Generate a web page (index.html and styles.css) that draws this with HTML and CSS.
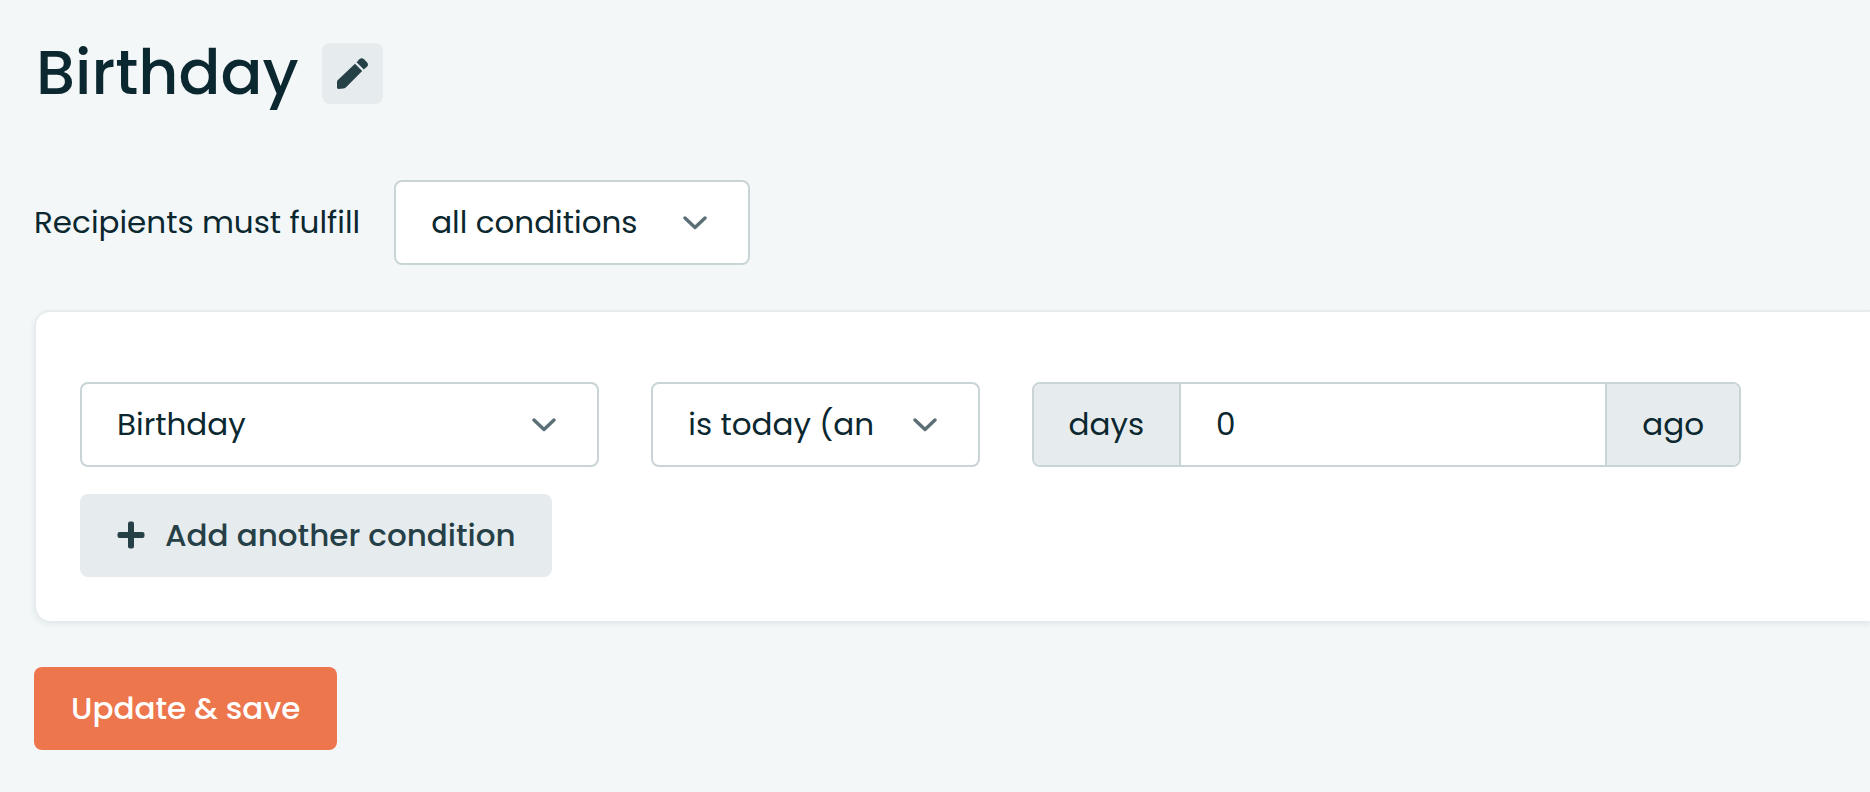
FILE: index.html
```
<!DOCTYPE html>
<html lang="en">
<head>
    <meta charset="UTF-8">
    <meta name="viewport" content="width=device-width, initial-scale=1.0">
    <title>Birthday</title>
    <link rel="stylesheet" href="styles.css">
</head>
<body>
    <main class="page">
        <header class="page-header">
            <h1>Birthday</h1>
            <button type="button" class="btn-edit" aria-label="Edit name">
                <svg class="icon-pencil" viewBox="0 0 31 31" aria-hidden="true">
                    <path d="M18 5.8 L25.2 13 L9.8 28.4 Q8.2 30.2 6.4 30.6 L1.4 31 Q0 31 0 29.6 V23.8 Q.2 22.6 1.4 21.6 Z"/>
                    <path d="M19.6 4.2 L22.4 1.2 Q24.4 -.8 26.8 1 L30 4.2 Q32 6.6 30 8.8 L26.8 11.6 Z"/>
                </svg>
            </button>
        </header>

        <form class="conditions">
            <div class="match">
                <label for="match">Recipients must fulfill</label>
                <div class="select match-select">
                    <select id="match">
                        <option>all conditions</option>
                        <option>any condition</option>
                    </select>
                    <svg class="chevron" viewBox="0 0 24 14" aria-hidden="true"><path d="M2 2 L12 11.5 L22 2"/></svg>
                </div>
            </div>

            <section class="card">
                <div class="condition">
                    <div class="select">
                        <select aria-label="Field">
                            <option>Birthday</option>
                        </select>
                        <svg class="chevron" viewBox="0 0 24 14" aria-hidden="true"><path d="M2 2 L12 11.5 L22 2"/></svg>
                    </div>
                    <div class="select">
                        <select aria-label="Operator">
                            <option>is today (an</option>
                        </select>
                        <svg class="chevron" viewBox="0 0 24 14" aria-hidden="true"><path d="M2 2 L12 11.5 L22 2"/></svg>
                    </div>
                    <div class="input-group">
                        <label class="addon" for="days">days</label>
                        <input type="text" id="days" value="0" inputmode="numeric">
                        <span class="addon">ago</span>
                    </div>
                </div>
                <button type="button" class="btn btn-light">
                    <svg class="icon-plus" viewBox="0 0 28 28" aria-hidden="true">
                        <rect x="11" y="0.5" width="6" height="27" rx="2"/>
                        <rect x="0.5" y="11" width="27" height="6" rx="2"/>
                    </svg>
                    Add another condition
                </button>
            </section>

            <button type="submit" class="btn btn-primary">Update &amp; save</button>
        </form>
    </main>
</body>
</html>
```
FILE: styles.css
```
* {
    box-sizing: border-box;
}

body {
    margin: 0;
    background-color: #f3f7f8;
    color: #0b272f;
    font-family: Poppins, Inter, sans-serif;
    font-size: 31px;
    line-height: 48px;
    overflow-x: hidden;
}

button,
input,
select {
    font: inherit;
    color: inherit;
}

.page {
    padding: 36px 0 40px 34px;
}

.page-header {
    display: flex;
    align-items: center;
    gap: 23px;
    padding-left: 2px;
}

h1 {
    margin: 0;
    font-size: 62px;
    font-weight: 500;
    line-height: 74px;
}

.btn-edit {
    display: flex;
    align-items: center;
    justify-content: center;
    width: 61px;
    height: 61px;
    padding: 0;
    border: none;
    border-radius: 8px;
    background-color: #e6ecee;
    cursor: pointer;
}

.icon-pencil {
    width: 31px;
    height: 31px;
    fill: #264047;
}

.conditions {
    display: flex;
    flex-direction: column;
    align-items: flex-start;
    margin-top: 70px;
}

.match {
    display: flex;
    align-items: center;
    gap: 34px;
}

.match label {
    padding-bottom: 2px;
}

.match-select {
    width: 356px;
}

.select {
    position: relative;
}

.select select {
    display: block;
    width: 100%;
    height: 85px;
    padding: 0 84px 2px 35px;
    border: 2px solid #c9d4d7;
    border-radius: 8px;
    background-color: #fff;
    appearance: none;
    cursor: pointer;
}

.chevron {
    position: absolute;
    top: 36px;
    right: 43px;
    width: 24px;
    height: 14px;
    fill: none;
    stroke: #5b6f76;
    stroke-width: 3.4;
    stroke-linecap: round;
    stroke-linejoin: round;
    pointer-events: none;
}

.card {
    align-self: stretch;
    margin-top: 45px;
    padding: 70px 129px 44px 44px;
    border: 2px solid #e6ecee;
    border-right: none;
    border-bottom: none;
    border-radius: 16px 0 0 16px;
    background-color: #fff;
    box-shadow: 0 3px 6px rgba(11, 39, 47, 0.08);
}

.condition {
    display: grid;
    grid-template-columns: 519fr 328fr 709fr;
    gap: 52px;
    margin-bottom: 27px;
}

.input-group {
    display: flex;
    height: 85px;
    border: 2px solid #c9d4d7;
    border-radius: 8px;
    overflow: hidden;
}

.addon {
    display: flex;
    align-items: center;
    padding: 0 35px 2px;
    background-color: #e6ecee;
}

.input-group input {
    flex: 1;
    min-width: 0;
    padding: 0 35px 2px;
    border: solid #c9d4d7;
    border-width: 0 2px;
    background-color: #fff;
}

.btn {
    display: flex;
    align-items: center;
    height: 83px;
    padding: 0 37px 2px;
    border: none;
    border-radius: 8px;
    font-weight: 500;
    cursor: pointer;
}

.btn-light {
    gap: 20px;
    padding-right: 36px;
    background-color: #e6ecee;
    color: #264047;
}

.icon-plus {
    width: 28px;
    height: 28px;
    fill: #264047;
}

.btn-primary {
    margin-top: 46px;
    background-color: #ed764d;
    color: #fff;
}
```
